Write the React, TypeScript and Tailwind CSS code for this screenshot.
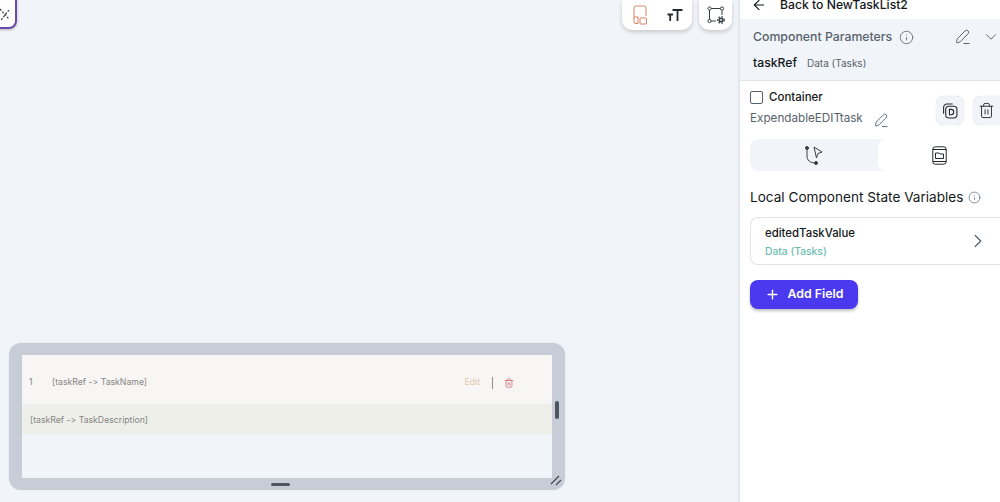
import React from "react";
import { ArrowLeft, Info, ChevronDown, ChevronRight, Trash2, Plus } from "lucide-react";

const PencilLine = ({ size = 16 }: { size?: number }) => (
  <svg width={size} height={size} viewBox="0 0 16 16" fill="none" stroke="#57636c" strokeWidth="1">
    <path d="M1.5 12.5 L2.5 9.5 L10 2 A1.4 1.4 0 0 1 13.2 4.6 L5.5 12.5 L2 14 Z" strokeLinejoin="round" />
    <path d="M8.5 14.5 H14.5" />
  </svg>
);

export default function App() {
  return (
    <div className="flex h-[502px] w-[1000px] overflow-hidden bg-[#f1f4f8] font-['Inter',sans-serif]">
      <div className="relative flex w-[739px] flex-col justify-between">
        <div className="absolute -left-[30px] -top-[20px] flex h-[49px] w-[47px] items-end justify-end rounded-[8px] border-2 border-[#6a4aa8] bg-white pb-[5px] pr-[4px] shadow-[0_1px_3px_rgba(0,0,0,0.25)]">
          <svg width="12" height="14" viewBox="0 0 12 14" fill="none" stroke="#3a3f45" strokeWidth="1.2" strokeDasharray="2 1.5">
            <path d="M1 1 L10 11 M10 2 L2 12" />
          </svg>
        </div>

        <div className="flex justify-end gap-[7px] pr-[7px]">
          <div className="flex h-[30px] w-[70px] items-center justify-between rounded-b-[10px] bg-white pl-[11px] pr-[9px] shadow-[0_2px_4px_rgba(0,0,0,0.18)]">
            <svg width="15" height="20" viewBox="0 0 15 20" fill="none" stroke="#d9825f" strokeWidth="1">
              <path d="M5 18.5 H3 A2 2 0 0 1 1 16.5 V3 A2 2 0 0 1 3 1 H11 A2 2 0 0 1 13 3 V11" />
              <path d="M1 12 H5 V18.5" />
              <rect x="7" y="13" width="6.5" height="6" rx="0.5" />
            </svg>
            <svg width="16" height="14" viewBox="0 0 16 14" fill="none" stroke="#23282d" strokeWidth="1.8">
              <path d="M5.5 2 H15.5 M10.5 2 V13 M0.5 6.5 H6 M3.2 6.5 V13" />
            </svg>
          </div>
          <div className="flex h-[30px] w-[33px] items-center justify-center rounded-b-[10px] bg-white shadow-[0_2px_4px_rgba(0,0,0,0.18)]">
            <svg width="18" height="18" viewBox="0 0 18 18" fill="none" stroke="#3a3f45" strokeWidth="1">
              <circle cx="2.5" cy="2.5" r="1.6" />
              <circle cx="15" cy="2.5" r="1.6" />
              <circle cx="2.5" cy="15" r="1.6" />
              <path d="M4.1 2.5 H13.4 M2.5 4.1 V13.4 M4.1 15 H9 M15 4.1 V9" />
              <circle cx="14" cy="14" r="2.6" fill="#3a3f45" stroke="none" />
              <circle cx="14" cy="14" r="3.3" strokeWidth="1.2" strokeDasharray="1.5 1.6" />
              <circle cx="14" cy="14" r="0.9" fill="#fff" stroke="none" />
            </svg>
          </div>
        </div>

        <div className="mb-[12px] ml-[9px] w-[556px]">
          <div className="relative h-[147px] rounded-[12px] bg-[#c6cdd6] px-[13px] py-[12px] shadow-[0_0_2px_rgba(0,0,0,0.08)]">
            <div className="flex h-full flex-col bg-[#f1f4f8] [font-feature-settings:'calt'_0]">
              <div className="flex h-[49px] items-center rounded-b-[10px] bg-[#f8f6f4] pt-[6px] text-[8.7px] text-[#858585]">
                <span className="ml-[7px] w-[23px]">1</span>
                <span className="flex-1">[taskRef -&gt; TaskName]</span>
                <span className="text-[#e3c9ae]">Edit</span>
                <span className="ml-[12px] h-[12px] w-px bg-[#8f8f8f]" />
                <Trash2 size={10} className="ml-[11px] mr-[38px] text-[#d0767a]" />
              </div>
              <div className="flex h-[30px] items-center bg-[#efefea] pl-[8px] pt-[4px] text-[8.7px] text-[#858585]">
                [taskRef -&gt; TaskDescription]
              </div>
            </div>
            <span className="absolute right-[6px] top-[58px] h-[18px] w-[4px] rounded-sm bg-[#4c5560]" />
            <span className="absolute bottom-[4px] left-[262px] h-[3px] w-[19px] rounded-sm bg-[#4c5560]" />
            <svg className="absolute bottom-[3px] right-[3px]" width="12" height="12" viewBox="0 0 12 12" stroke="#3f4852" strokeWidth="1.2">
              <path d="M1 9 L9 1 M6 10 L11 5" />
            </svg>
          </div>
        </div>
      </div>

      <div className="flex w-[261px] flex-col border-l border-[#e0e3e7] bg-white shadow-[-1px_0_3px_rgba(0,0,0,0.06)]">
        <div className="flex h-[19px] shrink-0 items-start overflow-hidden pl-[11px]">
          <div className="-mt-[3px] flex items-center gap-[13px]">
            <ArrowLeft size={16} strokeWidth={1.6} className="text-[#14181b]" />
            <span className="text-[12.2px] font-medium leading-[16px] text-[#14181b]">Back to NewTaskList2</span>
          </div>
        </div>

        <div className="h-[62px] shrink-0 border-b border-[#e0e3e7] bg-[#f1f4f8] pl-[13px] pt-[9px]">
          <div className="flex items-center">
            <span className="text-[12.3px] font-medium leading-[18px] text-[#57636c]">Component Parameters</span>
            <Info size={15} strokeWidth={1.3} className="ml-[7px] text-[#57636c]" />
            <span className="ml-auto"><PencilLine size={16} /></span>
            <ChevronDown size={18} strokeWidth={1.3} className="ml-[11px] text-[#57636c]" />
          </div>
          <div className="mt-[8px] flex items-baseline gap-[10px]">
            <span className="text-[12.2px] font-medium text-[#14181b]">taskRef</span>
            <span className="text-[10px] text-[#57636c]">Data (Tasks)</span>
          </div>
        </div>

        <div className="flex pl-[10px] pt-[8px]">
          <div className="flex-1">
            <div className="flex h-[16px] items-center gap-[6px]">
              <span className="h-[13px] w-[13px] rounded-[2px] border border-[#57636c]" />
              <span className="pt-[1px] text-[11.5px] font-medium text-[#14181b]">Container</span>
            </div>
            <div className="mt-[3px] flex items-center gap-[11px]">
              <span className="text-[11.7px] leading-[20px] text-[#57636c]">ExpendableEDITtask</span>
              <span className="mt-[5px]"><PencilLine size={15} /></span>
            </div>
          </div>
          <div className="mt-[7px] flex gap-[9px]">
            <div className="flex h-[29px] w-[28px] items-center justify-center rounded-[8px] bg-[#f1f4f8] shadow-[0_0_1px_rgba(0,0,0,0.25)]">
              <svg width="16" height="16" viewBox="0 0 15 15" fill="none" stroke="#23282d" strokeWidth="1">
                <path d="M1.5 10 V4 A3 3 0 0 1 4.5 1 H10" />
                <rect x="3.5" y="3" width="10.5" height="11" rx="3" />
                <path d="M7 6 V11 H8.5 A2.5 2.5 0 0 0 8.5 6 Z" />
              </svg>
            </div>
            <div className="flex h-[29px] w-[27px] items-center justify-center rounded-l-[8px] bg-[#f1f4f8] shadow-[0_0_1px_rgba(0,0,0,0.25)]">
              <Trash2 size={17} strokeWidth={1.3} className="text-[#23282d]" />
            </div>
          </div>
        </div>

        <div className="ml-[10px] mt-[11px] flex h-[32px] rounded-l-[8px] bg-[#f1f4f8]">
          <div className="flex w-[128px] items-center justify-center">
            <svg width="20" height="20" viewBox="0 0 20 20" fill="none" stroke="#3a3f45" strokeWidth="1">
              <circle cx="3" cy="3" r="1.5" fill="#3a3f45" />
              <circle cx="12" cy="18" r="1.5" fill="#3a3f45" />
              <path d="M3 4.5 V11 C3 15 6 18 11 18" />
              <path d="M10 2 L18 7 L14 8.5 L12.5 13 Z" strokeLinejoin="round" />
            </svg>
          </div>
          <div className="flex flex-1 items-center justify-center rounded-l-[8px] bg-white">
            <svg width="15" height="19" viewBox="0 0 15 19" fill="none" stroke="#23282d" strokeWidth="1">
              <rect x="0.8" y="0.8" width="13.4" height="17.4" rx="2.5" />
              <path d="M0.8 3.5 H14.2 M0.8 15.5 H14.2" />
              <path d="M3.5 7 H7 L8 8 H11.5 V12.5 H3.5 Z" />
            </svg>
          </div>
        </div>

        <div className="ml-[10px] mt-[16px] flex items-center gap-[5px]">
          <span className="whitespace-nowrap text-[13.6px] leading-[20px] text-[#14181b]">Local Component State Variables</span>
          <Info size={13} strokeWidth={1.3} className="text-[#57636c]" />
        </div>

        <div className="ml-[10px] mt-[10px] flex h-[48px] items-center justify-between rounded-l-[8px] border border-r-0 border-[#e0e3e7] pl-[14px] pr-[11px]">
          <div>
            <div className="text-[11.4px] font-medium leading-[16px] text-[#14181b]">editedTaskValue</div>
            <div className="mt-[3px] text-[10.3px] font-medium leading-[14px] text-[#6dbdae]">Data (Tasks)</div>
          </div>
          <ChevronRight size={22} strokeWidth={1.4} className="text-[#57636c]" />
        </div>

        <div className="ml-[10px] mt-[15px] flex h-[29px] w-[108px] items-center justify-center gap-[8px] rounded-[8px] bg-[#4b39ef] shadow-[0_2px_3px_rgba(0,0,0,0.25)]">
          <Plus size={15} strokeWidth={2.2} className="text-white" />
          <span className="text-[12.3px] font-semibold text-white">Add Field</span>
        </div>
      </div>
    </div>
  );
}
